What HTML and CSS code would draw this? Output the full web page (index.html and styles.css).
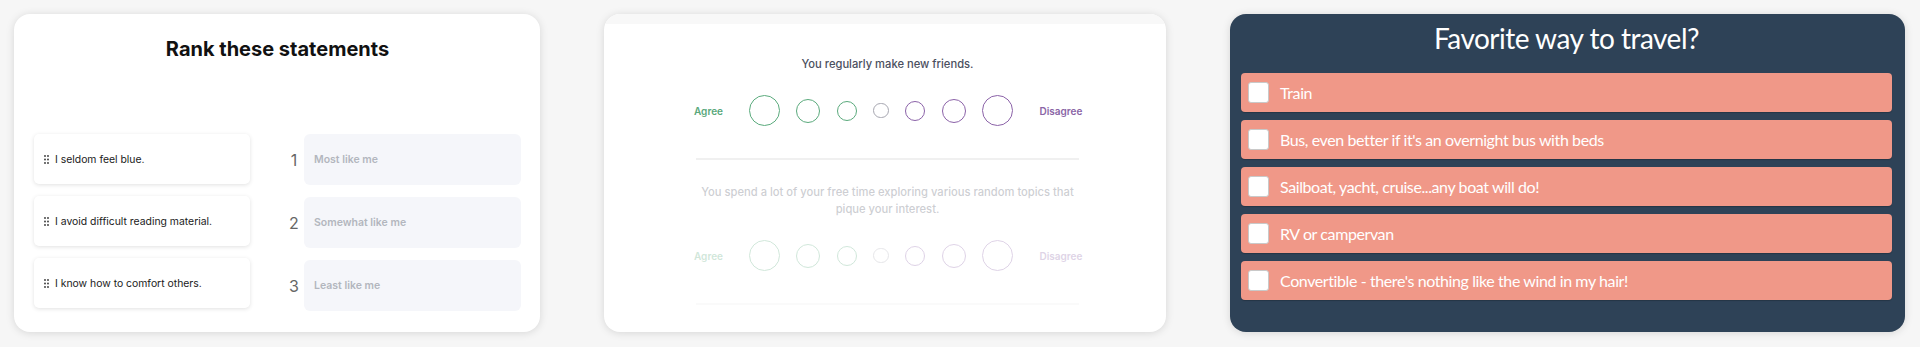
FILE: index.html
```html
<!DOCTYPE html>
<html lang="en">
<head>
    <meta charset="UTF-8">
    <meta name="viewport" content="width=device-width, initial-scale=1.0">
    <title>Survey question types</title>
    <link rel="stylesheet" href="styles.css">
</head>
<body>
    <div class="board">
        <!-- Ranking -->
        <section class="card rank-card">
            <h2 class="rank-title">Rank these statements</h2>
            <div class="rank-grid">
                <div class="rank-items">
                    <div class="rank-item">
                        <svg class="handle" width="5" height="9" viewBox="0 0 5 9"><circle cx="1" cy="1" r="0.9"/><circle cx="4" cy="1" r="0.9"/><circle cx="1" cy="4.5" r="0.9"/><circle cx="4" cy="4.5" r="0.9"/><circle cx="1" cy="8" r="0.9"/><circle cx="4" cy="8" r="0.9"/></svg>
                        <span>I seldom feel blue.</span>
                    </div>
                    <div class="rank-item">
                        <svg class="handle" width="5" height="9" viewBox="0 0 5 9"><circle cx="1" cy="1" r="0.9"/><circle cx="4" cy="1" r="0.9"/><circle cx="1" cy="4.5" r="0.9"/><circle cx="4" cy="4.5" r="0.9"/><circle cx="1" cy="8" r="0.9"/><circle cx="4" cy="8" r="0.9"/></svg>
                        <span>I avoid difficult reading material.</span>
                    </div>
                    <div class="rank-item">
                        <svg class="handle" width="5" height="9" viewBox="0 0 5 9"><circle cx="1" cy="1" r="0.9"/><circle cx="4" cy="1" r="0.9"/><circle cx="1" cy="4.5" r="0.9"/><circle cx="4" cy="4.5" r="0.9"/><circle cx="1" cy="8" r="0.9"/><circle cx="4" cy="8" r="0.9"/></svg>
                        <span>I know how to comfort others.</span>
                    </div>
                </div>
                <div class="rank-slots">
                    <div class="slot-row"><span class="slot-num">1</span><div class="slot">Most like me</div></div>
                    <div class="slot-row"><span class="slot-num">2</span><div class="slot">Somewhat like me</div></div>
                    <div class="slot-row"><span class="slot-num">3</span><div class="slot">Least like me</div></div>
                </div>
            </div>
        </section>

        <!-- Likert scale -->
        <section class="card scale-card">
            <div class="scale-strip"></div>
            <div class="scale-body">
                <div class="scale-question">
                    <p class="question">You regularly make new friends.</p>
                    <div class="scale-row">
                        <span class="agree">Agree</span>
                        <div class="dots">
                            <span class="dot green d1"></span>
                            <span class="dot green d2"></span>
                            <span class="dot green d3"></span>
                            <span class="dot neutral d4"></span>
                            <span class="dot purple d3"></span>
                            <span class="dot purple d2"></span>
                            <span class="dot purple d1"></span>
                        </div>
                        <span class="disagree">Disagree</span>
                    </div>
                    <hr class="divider">
                </div>
                <div class="scale-question faded">
                    <p class="question">You spend a lot of your free time exploring various random topics that pique your interest.</p>
                    <div class="scale-row">
                        <span class="agree">Agree</span>
                        <div class="dots">
                            <span class="dot green d1"></span>
                            <span class="dot green d2"></span>
                            <span class="dot green d3"></span>
                            <span class="dot neutral d4"></span>
                            <span class="dot purple d3"></span>
                            <span class="dot purple d2"></span>
                            <span class="dot purple d1"></span>
                        </div>
                        <span class="disagree">Disagree</span>
                    </div>
                    <hr class="divider">
                </div>
            </div>
        </section>

        <!-- Multiple choice -->
        <section class="card travel-card">
            <h2 class="travel-title">Favorite way to travel?</h2>
            <ul class="options">
                <li class="option"><span class="box"></span>Train</li>
                <li class="option"><span class="box"></span>Bus, even better if it's an overnight bus with beds</li>
                <li class="option"><span class="box"></span>Sailboat, yacht, cruise...any boat will do!</li>
                <li class="option"><span class="box"></span>RV or campervan</li>
                <li class="option"><span class="box"></span>Convertible - there's nothing like the wind in my hair!</li>
            </ul>
        </section>
    </div>
</body>
</html>
```

FILE: styles.css
```css
body {
    margin: 0;
    background-color: #f6f6f6;
    font-family: Inter, "Noto Sans", sans-serif;
}
.board {
    display: grid;
    grid-template-columns: 526px 562px 675px;
    column-gap: 64px;
    padding: 14px;
    height: 347px;
    box-sizing: border-box;
}
.card {
    height: 318px;
    border-radius: 16px;
    background-color: #fff;
    box-shadow: 0 1px 8px rgba(0, 0, 0, 0.13);
    box-sizing: border-box;
    overflow: hidden;
}

/* ranking card */
.rank-card {
    padding: 21px 19px 0 20px;
}
.rank-title {
    margin: 0;
    font-size: 20px;
    line-height: 28px;
    font-weight: 700;
    text-align: center;
    color: #111;
}
.rank-grid {
    display: flex;
    justify-content: space-between;
    margin-top: 71px;
}
.rank-items, .rank-slots {
    display: flex;
    flex-direction: column;
    gap: 12px;
}
.rank-item {
    display: flex;
    align-items: center;
    gap: 6px;
    width: 216px;
    height: 50px;
    padding-left: 10px;
    box-sizing: border-box;
    border-radius: 5px;
    background-color: #fff;
    box-shadow: 0 1px 4px rgba(0, 0, 0, 0.12);
    font-size: 10.4px;
    color: #1a1a1a;
}
.handle {
    fill: #333;
    flex-shrink: 0;
}
.slot-row {
    display: flex;
    align-items: center;
}
.slot-num {
    width: 20px;
    text-align: center;
    font-size: 16px;
    color: #666;
}
.slot {
    display: flex;
    align-items: center;
    width: 217px;
    height: 51px;
    padding-left: 10px;
    box-sizing: border-box;
    border-radius: 6px;
    background-color: #f5f6fa;
    font-size: 10.5px;
    font-weight: 600;
    color: #b3b6be;
}

/* likert card */
.scale-strip {
    height: 10px;
    background-color: #f8f8f8;
}
.scale-body {
    padding: 32px 85px 0 90px;
}
.scale-question + .scale-question {
    margin-top: 24px;
}
.question {
    margin: 0 -6px 22px;
    font-size: 11.2px;
    line-height: 17px;
    font-weight: 500;
    text-align: center;
    color: #4b5060;
}
.scale-row {
    display: flex;
    align-items: center;
    gap: 26px;
    height: 31px;
}
.agree, .disagree {
    font-size: 10px;
    font-weight: 600;
}
.agree {
    color: #59a87b;
}
.disagree {
    color: #8a65a6;
}
.dots {
    display: flex;
    align-items: center;
    gap: 16.5px;
}
.dot {
    border-radius: 50%;
    border: 1.5px solid;
    box-sizing: border-box;
}
.dot.green {
    border-color: #5aaa7c;
}
.dot.purple {
    border-color: #8b62a8;
}
.dot.neutral {
    border-color: #a6a6b0;
}
.d1 {
    width: 31px;
    height: 31px;
}
.d2 {
    width: 24px;
    height: 24px;
}
.d3 {
    width: 20px;
    height: 20px;
}
.d4 {
    width: 15.5px;
    height: 15.5px;
}
.divider {
    margin: 32px 2px 0;
    border: none;
    height: 2px;
    background-color: #f0f0f0;
}
.faded {
    opacity: 0.28;
}

/* multiple choice card */
.travel-card {
    padding: 10px 13px 0 11px;
    background-color: #2e4257;
    font-family: Lato, sans-serif;
}
.travel-title {
    margin: 0 0 21px;
    font-size: 28px;
    line-height: 28px;
    font-weight: 400;
    letter-spacing: -0.5px;
    text-align: center;
    color: #fff;
}
.options {
    display: flex;
    flex-direction: column;
    gap: 8px;
    margin: 0;
    padding: 0;
    list-style: none;
}
.option {
    display: flex;
    align-items: center;
    gap: 11px;
    height: 39px;
    padding-left: 7px;
    border-radius: 4px;
    background-color: #f09888;
    box-shadow: 0 1px 1px rgba(0, 0, 0, 0.2);
    font-size: 16px;
    letter-spacing: -0.4px;
    color: #fff;
}
.box {
    width: 21px;
    height: 21px;
    box-sizing: border-box;
    border: 1px solid #c9c9c9;
    border-radius: 3px;
    background-color: #fff;
}
```
